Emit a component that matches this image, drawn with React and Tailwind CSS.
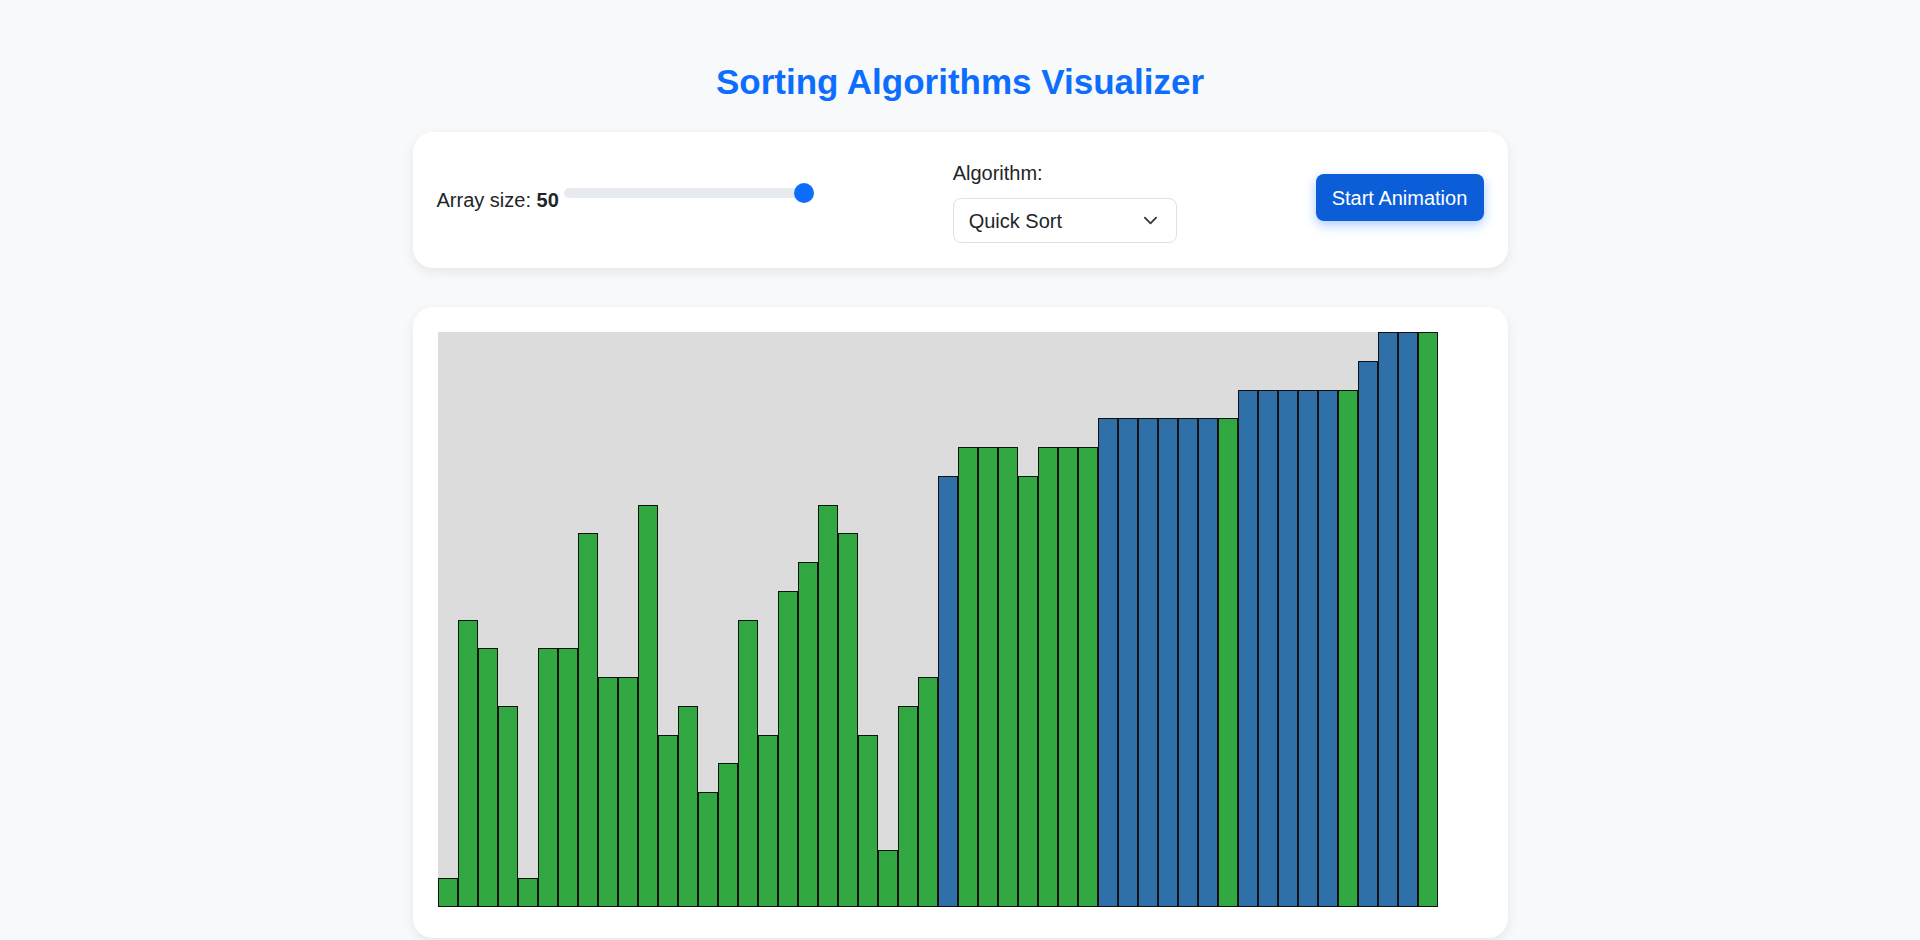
import React, { useState } from "react";

// bar values on a 0..20 scale, colour "g" = sorted/green, "b" = blue
const BARS = [
  [1, "g"], [10, "g"], [9, "g"], [7, "g"], [1, "g"], [9, "g"], [9, "g"], [13, "g"],
  [8, "g"], [8, "g"], [14, "g"], [6, "g"], [7, "g"], [4, "g"], [5, "g"], [10, "g"],
  [6, "g"], [11, "g"], [12, "g"], [14, "g"], [13, "g"], [6, "g"], [2, "g"], [7, "g"],
  [8, "g"], [15, "b"], [16, "g"], [16, "g"], [16, "g"], [15, "g"], [16, "g"], [16, "g"],
  [16, "g"], [17, "b"], [17, "b"], [17, "b"], [17, "b"], [17, "b"], [17, "b"], [17, "g"],
  [18, "b"], [18, "b"], [18, "b"], [18, "b"], [18, "b"], [18, "g"], [19, "b"], [20, "b"],
  [20, "b"], [20, "g"],
];

function ChevronDown() {
  return (
    <svg
      width="15"
      height="15"
      viewBox="0 0 16 16"
      fill="none"
      stroke="#343a40"
      strokeWidth="2"
      strokeLinecap="round"
      strokeLinejoin="round"
    >
      <path d="m2 5 6 6 6-6" />
    </svg>
  );
}

export default function App() {
  const [size] = useState(50);
  const [algorithm] = useState("Quick Sort");

  return (
    <div
      className="min-h-screen bg-[#f8f9fa] text-[#212529]"
      style={{ fontFamily: '"Liberation Sans", Arial, sans-serif' }}
    >
      <h1 className="pt-[62px] text-center text-[35px] font-bold leading-[40px] text-[#0d6efd]">
        Sorting Algorithms Visualizer
      </h1>

      <div className="mx-auto mt-[30px] w-[1095px]">
        {/* Controls */}
        <div className="flex h-[136px] items-center justify-between rounded-[20px] bg-white px-[24px] shadow-[0_4px_12px_rgba(0,0,0,0.08)]">
          <div className="flex items-center text-[20px] leading-[23px]">
            <span>
              Array size: <b>{size}</b>
            </span>
            <div className="mb-[15px] ml-[5px] flex h-[20px] w-[250px] items-center">
              <div className="h-[10px] flex-1 rounded-full bg-[#e7eaee]" />
              <div className="-ml-[10px] h-[20px] w-[20px] rounded-full bg-[#0d6efd]" />
            </div>
          </div>

          <div className="pt-[5px]">
            <label className="mb-[13px] block text-[20px] leading-[23px]">
              Algorithm:
            </label>
            <div className="flex h-[45px] w-[224px] items-center justify-between rounded-[8px] border border-[#dee2e6] bg-white pl-[15px] pr-[18px] text-[20px]">
              <span>{algorithm}</span>
              <ChevronDown />
            </div>
          </div>

          <button className="mb-[5px] flex h-[47px] w-[168px] items-center justify-center rounded-[8px] bg-[#0b5ed7] text-[20px] text-white shadow-[0_4px_12px_rgba(13,110,253,0.35)]">
            Start Animation
          </button>
        </div>

        {/* Chart */}
        <div className="mt-[39px] rounded-[20px] bg-white px-[25px] pb-[31px] pt-[25px] shadow-[0_4px_12px_rgba(0,0,0,0.08)]">
          <div className="flex h-[575px] w-[1000px] items-end bg-[#dcdcdc]">
            {BARS.map(([v, c], i) => (
              <div
                key={i}
                className={
                  c === "b"
                    ? "w-[20px] border border-[#111] bg-[#3070a8]"
                    : "w-[20px] border border-[#111] bg-[#32a842]"
                }
                style={{ height: `${v * 5}%` }}
              />
            ))}
          </div>
        </div>
      </div>
    </div>
  );
}
